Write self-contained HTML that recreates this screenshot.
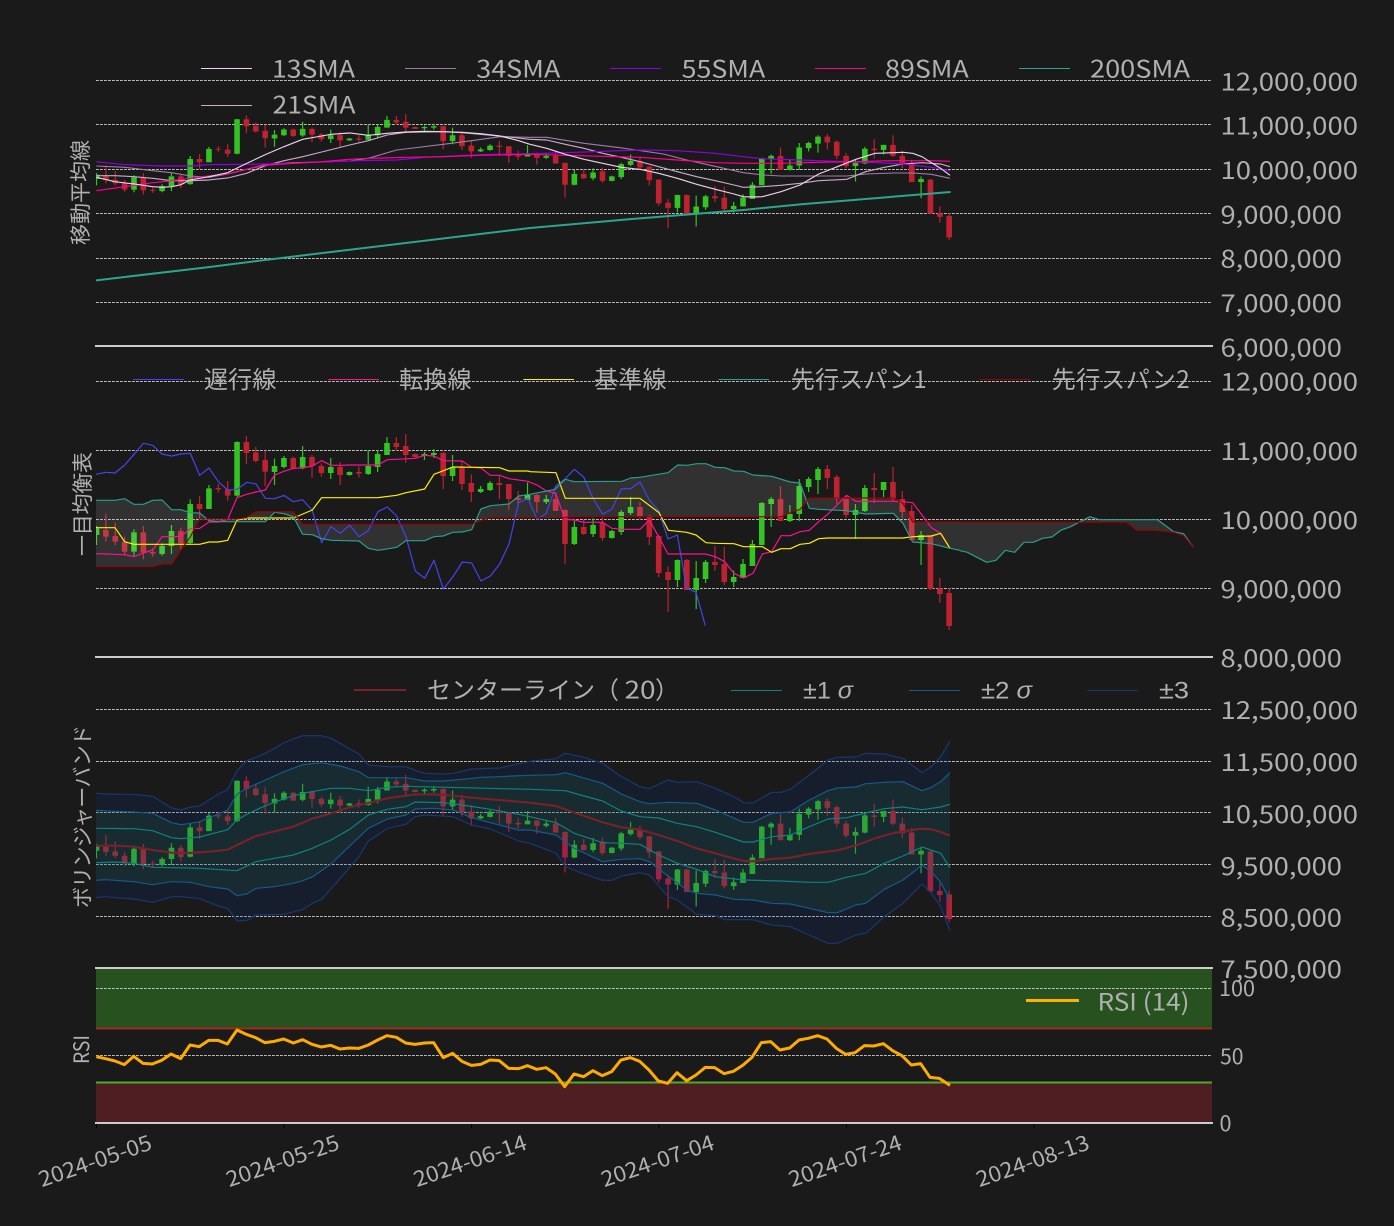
<!DOCTYPE html>
<html lang="ja"><head><meta charset="utf-8"><title>Chart</title>
<style>
html,body{margin:0;padding:0;background:#1a1a1a;width:1394px;height:1226px;overflow:hidden}
svg{display:block}
text{font-family:"Noto Sans CJK JP","Liberation Sans",sans-serif;fill:#b0b0b0}
text.l{font-family:"Liberation Sans","Noto Sans CJK JP",sans-serif}
.g{stroke:#bdbdbd;stroke-width:1;stroke-dasharray:2.8 1.2;fill:none}
.s{stroke:#cccccc;stroke-width:2;fill:none}
.c path{vector-effect:non-scaling-stroke;fill:none}
.w{stroke-width:1.2}.b{stroke-width:5.6}
.gn{stroke:#33c322}.rd{stroke:#bd2230}
polyline{fill:none;stroke-linejoin:round}
</style></head><body>
<svg width="1394" height="1226" viewBox="0 0 1394 1226" xmlns="http://www.w3.org/2000/svg">
<defs>
<clipPath id="pc"><rect x="96" y="0" width="1116" height="1226"/></clipPath>
<g id="cd" class="c">
<path class="gn w" d="M0 498V555M4 508V587M7 550V587M8 495V582M10 418V552M12 375V447M15 244V410M19 296V375M20 288V325M22 258V328M25 294V357M27 334V347M29 270V345M30 270V336M31 231V285M35 276V300M36 267V294M38 285V363M41 378V399M42 363V393M46 367V420M48 405V432M51 483V555M53 475V531M55 510V536M56 450V525M57 411V465M62 598V681M64 603V747M65 600V669M68 632V681M69 597V654M70 540V618M71 426V555M72 411V501M74 435V486M75 357V483M76 351V396M77 321V402M81 432V537M82 375V456M84 366V411M88 513V615"/>
<path class="gn b" d="M0 505V525M4 517V575M7 558V582M8 513V558M10 432V549M12 385V447M15 246V407M19 318V336M20 294V321M22 291V322M25 321V339M27 336V345M29 318V342M30 282V321M31 249V285M35 282V288M36 279V285M38 321V348M41 387V396M42 369V390M46 405V420M48 417V426M51 501V552M53 495V522M55 513V534M56 456V516M57 441V459M62 600V660M64 654V690M65 606V657M68 651V666M69 612V654M70 552V618M71 429V555M72 417V432M74 462V483M75 378V462M76 357V381M77 327V360M81 450V465M82 384V453M84 366V390M88 525V540"/>
<path class="rd w" d="M1 462V545M2 488V555M3 530V585M5 498V598M6 565V590M9 503V568M11 408V478M13 372V398M14 363V422M16 228V312M17 261V308M18 272V378M21 290V327M23 285V353M24 310V350M26 306V375M28 320V353M32 231V273M33 222V308M34 281V292M37 276V387M39 303V390M40 343V426M43 347V417M44 372V450M45 393V435M47 402V458M49 396V453M50 448V612M52 478V525M54 472V543M58 426V480M59 465V555M60 525V651M61 620V756M63 597V690M66 558V633M67 561V675M73 378V483M78 315V387M79 345V432M80 405V474M83 339V429M85 321V423M86 393V474M87 435V540M89 525V690M90 654V729M91 684V810"/>
<path class="rd b" d="M1 510V530M2 528V545M3 545V575M5 517V578M6 576V581M9 513V550M11 432V447M13 384V388M14 388V407M16 246V279M17 277V303M18 300V335M21 294V325M23 291V318M24 318V339M26 321V345M28 336V341M32 249V261M33 258V285M34 282V291M37 279V348M39 321V372M40 369V396M43 369V375M44 372V417M45 414V420M47 405V426M49 417V453M50 450V552M52 501V522M54 489V534M58 441V471M59 468V531M60 528V639M61 636V660M63 600V690M66 606V615M67 612V666M73 417V483M78 327V354M79 351V417M80 417V465M83 384V390M85 366V417M86 417V456M87 453V540M89 528V687M90 685V702M91 699V798"/>
</g>
</defs>

<rect width="1394" height="1226" fill="#1a1a1a"/>

<!-- RSI fills -->
<rect x="96" y="968" width="1116" height="60.5" fill="#275220"/>
<rect x="96" y="1082.5" width="1116" height="40.5" fill="#4e1e22"/>

<!-- grid -->
<path class="g" d="M96 80.5H1212M96 124.5H1212M96 169.5H1212M96 213.5H1212M96 258.5H1212M96 302.5H1212M96 381.5H1212M96 450.5H1212M96 519.5H1212M96 588.5H1212M96 709.5H1212M96 761.5H1212M96 812.5H1212M96 864.5H1212M96 916.5H1212M96 988.5H1212M96 1055.5H1212"/>

<g clip-path="url(#pc)">
<!-- Panel 1 candles -->
<use href="#cd" transform="matrix(9.37 0 0 .214 96.5 66.6)"/>
<!-- Panel 2 candles -->
<use href="#cd" transform="matrix(9.37 0 0 .33333 96.5 360)"/>
<!-- Panel 3 candles -->
<use href="#cd" transform="matrix(9.37 0 0 .2507 96.5 719.1)"/>

<!-- Panel 1 lines left -->
<g transform="translate(90,50) scale(.33333)">
<polyline stroke="#2da58e" stroke-width="6" points="18,691 350,652 590,622 1320,534"/>
<polyline stroke="#a07ca8" stroke-width="3.3" points="19,348 104,352 188,362 245,368 301,378 357,382 413,372 470,358 526,344 610,338 695,336 779,333 835,325 920,300 1060,283 1145,272 1230,260 1320,262"/>
<polyline stroke="#cba9cb" stroke-width="3.4" points="19,377 75,377 132,380 188,385 245,392 301,392 357,390 413,384 470,370 526,347 582,332 638,320 695,306 779,285 835,272 892,255 948,247 1060,245 1117,248 1229,258 1320,268"/>
<polyline stroke="#9000e0" stroke-width="3.6" points="19,335 104,344 216,348 301,348 357,344 470,343 610,340 723,335 807,332 920,330 1004,322 1089,318 1173,314 1320,311"/>
<polyline stroke="#ff0090" stroke-width="3.6" points="19,422 104,410 188,398 245,392 301,385 357,378 413,371 470,358 526,346 610,340 695,335 779,328 835,325 948,322 1060,320 1173,316 1320,313"/>
<polyline stroke="#efd0ec" stroke-width="3.4" points="19,382 75,395 132,402 188,410 216,412 245,410 273,404 301,390 357,380 413,368 470,340 526,314 582,290 638,268 695,258 723,253 779,249 835,256 892,250 948,246 1004,244 1060,245 1117,247 1173,251 1229,258 1286,272 1320,283"/>
</g>
<!-- Panel 1 lines right -->
<g transform="translate(530,50) scale(.33333)">
<polyline stroke="#2da58e" stroke-width="6" points="0,534 330,505 640,480 810,463 1262,426"/>
<polyline stroke="#a07ca8" stroke-width="3.3" points="0,262 50,262 162,280 270,293 400,312 470,330 560,350 640,368 700,375 753,378 850,378 950,378 1007,372 1091,369 1148,369 1204,373 1260,385"/>
<polyline stroke="#cba9cb" stroke-width="3.4" points="0,268 50,270 106,283 162,295 218,310 274,322 330,335 386,350 442,365 500,380 556,392 612,405 640,412 697,410 753,406 810,400 866,392 950,388 1007,365 1063,352 1119,342 1176,338 1232,342 1260,350"/>
<polyline stroke="#9000e0" stroke-width="3.6" points="0,311 106,308 218,304 330,300 442,302 556,310 640,320 697,326 810,330 922,334 1035,338 1119,342 1204,352 1260,362"/>
<polyline stroke="#ff0090" stroke-width="3.6" points="0,313 106,316 218,319 330,322 442,330 556,338 640,340 753,340 866,337 978,335 1091,332 1204,332 1260,334"/>
<polyline stroke="#efd0ec" stroke-width="3.4" points="0,283 50,295 106,313 162,328 218,340 274,352 330,358 386,370 442,385 500,403 556,418 612,432 640,440 669,441 697,440 753,425 810,405 866,372 922,350 978,328 1035,310 1091,308 1119,307 1148,310 1176,320 1204,338 1232,355 1260,376"/>
</g>

<!-- Panel 2 left -->
<g transform="translate(90,360) scale(.33333)">
<path fill="#fff" fill-opacity=".1" fill-rule="evenodd" d="M18 421L75 421 104 416 132 433 160 433 188 421 216 420 245 449 273 449 301 458 329 459 357 482 385 485 526 485 554 457 582 461 610 470 638 523 667 524 695 536 723 541 807 543 835 565 864 571 920 562 948 542 1004 542 1032 530 1060 528 1089 517 1117 516 1145 509 1173 447 1201 437 1257 432 1286 408 1320 403V900H18ZM18 620L188 620 216 612 245 612 273 570 301 530 329 477 441 477 470 473 498 455 610 455 638 493 1145 493 1173 481 1201 473 1320 473V900H18Z"/>
<polyline stroke="#4444ee" stroke-width="3.6" points="18,343 47,337 75,339 104,315 132,283 160,250 188,256 216,282 245,288 273,282 301,280 329,346 357,324 385,365 413,390 441,388 470,367 498,372 526,415 554,416 582,406 610,425 638,419 667,452 695,548 723,500 751,520 779,495 807,530 835,512 864,455 892,441 920,468 948,530 976,633 1004,655 1032,601 1060,687 1089,650 1117,606 1145,609 1173,663 1201,648 1229,612 1257,552 1286,428 1314,415"/>
<polyline stroke="#ff1090" stroke-width="3.6" points="18,581 47,582 75,583 104,584 132,590 160,579 188,570 216,530 245,530 273,529 301,506 329,505 357,486 385,486 413,478 441,413 470,403 498,396 526,390 554,345 582,334 610,325 638,324 667,318 695,302 723,316 751,316 779,315 835,315 864,315 892,299 920,298 976,295 1004,286 1032,288 1060,302 1117,303 1145,322 1173,324 1201,346 1229,346 1257,356 1314,364 1320,367"/>
<polyline stroke="#ffee00" stroke-width="3.6" points="18,503 75,503 104,545 132,553 329,553 357,546 385,546 413,541 441,480 470,474 610,474 667,450 695,413 864,413 920,406 948,398 1004,387 1032,343 1089,321 1229,323 1257,333 1314,333 1320,335"/>
<polyline stroke="#2a9d8f" stroke-width="3.6" points="18,421 75,421 104,416 132,433 160,433 188,421 216,420 245,449 273,449 301,458 329,459 357,482 385,485 526,485 554,457 582,461 610,470 638,523 667,524 695,536 723,541 807,543 835,565 864,571 920,562 948,542 1004,542 1032,530 1060,528 1089,517 1117,516 1145,509 1173,447 1201,437 1257,432 1286,408 1320,403"/>
<polyline stroke="#990000" stroke-width="3.6" points="18,620 188,620 216,612 245,612 273,570 301,530 329,477 441,477 470,473 498,455 610,455 638,493 1145,493 1173,481 1201,473 1320,473"/>
</g>
<!-- Panel 2 middle -->
<g transform="translate(530,360) scale(.33333)">
<path fill="#fff" fill-opacity=".1" fill-rule="evenodd" d="M0 403L75 388 106 358 133 365 276 364 302 354 330 352 414 338 443 315 472 316 500 311 528 311 556 322 584 323 612 333 641 334 669 345 725 349 781 366 810 369 838 445 866 448 950 452 1007 462 1090 460 1119 490 1148 546 1204 551 1260 565 1290 571V900H0ZM0 473L106 472 133 470 753 470 781 458 810 448 838 414 1090 414 1119 430 1148 486 1290 486V900H0Z"/>
<polyline stroke="#4444ee" stroke-width="3.6" points="-6,415 21,478 49,460 77,378 105,357 133,328 161,351 189,415 218,463 246,447 274,386 302,386 330,366 358,420 386,452 414,537 442,525 470,685 498,697 526,797"/>
<polyline stroke="#ff1090" stroke-width="3.6" points="0,367 21,375 49,393 77,400 105,478 133,480 161,487 218,487 246,505 274,508 330,508 358,480 386,530 414,582 526,582 556,590 584,605 612,640 641,654 669,640 697,582 725,575 753,527 781,527 810,515 838,511 866,485 894,462 950,406 978,424 1090,424 1119,425 1148,428 1176,465 1204,503 1232,520 1260,565"/>
<polyline stroke="#ffee00" stroke-width="3.6" points="0,335 78,338 106,415 330,415 387,458 415,511 470,517 498,525 528,548 556,550 612,551 641,560 697,560 725,577 753,566 781,566 810,553 838,550 866,536 894,534 1119,534 1148,530 1204,528 1232,520 1260,565"/>
<polyline stroke="#2a9d8f" stroke-width="3.6" points="0,403 75,388 106,358 133,365 276,364 302,354 330,352 414,338 443,315 472,316 500,311 528,311 556,322 584,323 612,333 641,334 669,345 725,349 781,366 810,369 838,445 866,448 950,452 1007,462 1090,460 1119,490 1148,546 1204,551 1260,565 1290,571"/>
<polyline stroke="#990000" stroke-width="3.6" points="0,473 106,472 133,470 753,470 781,458 810,448 838,414 1090,414 1119,430 1148,486 1290,486"/>
</g>
<!-- Panel 2 right -->
<g transform="translate(960,340) scale(.33333)">
<path fill="#fff" fill-opacity=".1" fill-rule="evenodd" d="M0 632L22 637 80 667 108 661 136 631 164 637 192 607 220 607 248 595 276 591 304 570 332 560 360 545 390 530 418 539 592 539 641 575 671 581 700 622V900H0ZM0 547L500 547 530 571 592 571 641 577 671 587 700 622V900H0Z"/>
<polyline stroke="#2a9d8f" stroke-width="3.6" points="0,632 22,637 80,667 108,661 136,631 164,637 192,607 220,607 248,595 276,591 304,570 332,560 360,545 390,530 418,539 592,539 641,575 671,581 700,622"/>
<polyline stroke="#990000" stroke-width="3.6" points="0,547 500,547 530,571 592,571 641,577 671,587 700,622"/>
</g>

<!-- Panel 3 left -->
<g transform="translate(90,670) scale(.33333)">
<path fill="rgb(0,47,153)" fill-opacity=".15" fill-rule="evenodd" d="M18 370L47 372 104 373 132 373 188 379 216 396 245 414 273 420 301 411 329 408 357 390 385 372 413 359 441 302 470 272 498 262 526 250 554 235 582 218 610 207 638 197 695 197 723 205 751 220 779 237 807 252 835 285 892 290 948 290 976 301 1004 310 1060 312 1089 310 1145 297 1229 294 1286 281 1320 274V1000H18ZM18 683L47 680 75 683 132 687 188 697 245 680 273 680 329 686 385 708 413 716 441 752 470 752 498 735 582 733 638 719 667 700 695 688 751 625 807 560 835 513 892 475 948 463 976 440 1004 435 1089 440 1145 465 1201 477 1286 513 1320 520V1000H18Z"/>
<path fill="rgb(35,129,66)" fill-opacity=".15" fill-rule="evenodd" d="M18 421L75 424 132 426 188 430 245 458 273 464 301 460 329 455 413 420 441 372 470 355 526 330 582 305 638 284 695 278 751 288 807 305 835 323 892 323 948 323 1004 333 1060 333 1117 328 1173 322 1229 320 1286 317 1320 316V1000H18ZM18 631L47 629 75 631 132 635 188 644 245 635 301 637 357 650 413 657 441 677 470 672 498 655 554 650 610 640 638 632 667 621 723 582 779 528 835 475 892 447 948 435 976 417 1032 415 1089 420 1145 443 1201 458 1286 480 1320 480V1000H18Z"/>
<polyline stroke="#17396e" stroke-width="3.6" points="18,370 47,372 104,373 132,373 188,379 216,396 245,414 273,420 301,411 329,408 357,390 385,372 413,359 441,302 470,272 498,262 526,250 554,235 582,218 610,207 638,197 695,197 723,205 751,220 779,237 807,252 835,285 892,290 948,290 976,301 1004,310 1060,312 1089,310 1145,297 1229,294 1286,281 1320,274"/>
<polyline stroke="#17396e" stroke-width="3.6" points="18,683 47,680 75,683 132,687 188,697 245,680 273,680 329,686 385,708 413,716 441,752 470,752 498,735 582,733 638,719 667,700 695,688 751,625 807,560 835,513 892,475 948,463 976,440 1004,435 1089,440 1145,465 1201,477 1286,513 1320,520"/>
<polyline stroke="#175a88" stroke-width="3.6" points="18,421 75,424 132,426 188,430 245,458 273,464 301,460 329,455 413,420 441,372 470,355 526,330 582,305 638,284 695,278 751,288 807,305 835,323 892,323 948,323 1004,333 1060,333 1117,328 1173,322 1229,320 1286,317 1320,316"/>
<polyline stroke="#175a88" stroke-width="3.6" points="18,631 47,629 75,631 132,635 188,644 245,635 301,637 357,650 413,657 441,677 470,672 498,655 554,650 610,640 638,632 667,621 723,582 779,528 835,475 892,447 948,435 976,417 1032,415 1089,420 1145,443 1201,458 1286,480 1320,480"/>
<polyline stroke="#118080" stroke-width="3.6" points="18,475 132,476 188,482 245,503 273,506 329,501 413,479 441,450 470,433 526,407 582,386 638,370 723,355 779,355 835,362 892,352 948,349 1320,358"/>
<polyline stroke="#118080" stroke-width="3.6" points="18,578 75,576 132,580 188,592 245,593 329,595 441,602 498,575 554,565 610,555 667,535 723,510 779,478 835,435 892,418 948,410 976,396 1060,398 1117,405 1201,418 1286,433 1320,440"/>
<polyline stroke="#7a2028" stroke-width="6.5" points="18,527 75,527 132,530 188,540 245,548 301,549 357,545 413,539 441,525 498,498 554,484 610,470 667,446 723,430 779,412 835,399 892,385 976,373 1060,374 1145,383 1286,395 1320,398"/>
</g>
<!-- Panel 3 right -->
<g transform="translate(530,670) scale(.33333)">
<path fill="rgb(0,47,153)" fill-opacity=".15" fill-rule="evenodd" d="M0 274L78 266 106 250 162 262 218 280 274 320 330 350 358 356 414 330 442 337 500 335 556 355 612 380 641 398 669 399 725 367 753 367 781 358 838 315 894 270 922 262 978 261 1007 250 1063 252 1119 265 1176 308 1204 290 1232 260 1260 213V1000H0ZM0 520L78 550 106 590 162 612 218 631 246 631 274 618 330 608 358 615 414 680 442 690 500 733 556 737 584 749 669 749 725 765 781 770 838 795 894 820 922 820 978 795 1007 790 1063 740 1119 700 1176 642 1204 670 1232 710 1260 782V1000H0Z"/>
<path fill="rgb(35,129,66)" fill-opacity=".15" fill-rule="evenodd" d="M0 316L78 314 106 308 218 340 274 372 330 395 358 401 414 397 500 400 556 420 641 457 669 457 725 430 781 426 838 390 894 362 922 354 978 351 1007 341 1063 337 1119 335 1176 362 1204 352 1232 335 1260 308V1000H0ZM0 480L78 495 133 535 218 575 274 568 330 566 358 575 414 618 470 660 500 670 556 675 612 688 669 690 725 700 781 702 838 715 894 728 922 728 978 705 1007 700 1063 658 1119 630 1176 586 1204 605 1232 637 1260 690V1000H0Z"/>
<polyline stroke="#17396e" stroke-width="3.6" points="0,274 78,266 106,250 162,262 218,280 274,320 330,350 358,356 414,330 442,337 500,335 556,355 612,380 641,398 669,399 725,367 753,367 781,358 838,315 894,270 922,262 978,261 1007,250 1063,252 1119,265 1176,308 1204,290 1232,260 1260,213"/>
<polyline stroke="#17396e" stroke-width="3.6" points="0,520 78,550 106,590 162,612 218,631 246,631 274,618 330,608 358,615 414,680 442,690 500,733 556,737 584,749 669,749 725,765 781,770 838,795 894,820 922,820 978,795 1007,790 1063,740 1119,700 1176,642 1204,670 1232,710 1260,782"/>
<polyline stroke="#175a88" stroke-width="3.6" points="0,316 78,314 106,308 218,340 274,372 330,395 358,401 414,397 500,400 556,420 641,457 669,457 725,430 781,426 838,390 894,362 922,354 978,351 1007,341 1063,337 1119,335 1176,362 1204,352 1232,335 1260,308"/>
<polyline stroke="#175a88" stroke-width="3.6" points="0,480 78,495 133,535 218,575 274,568 330,566 358,575 414,618 470,660 500,670 556,675 612,688 669,690 725,700 781,702 838,715 894,728 922,728 978,705 1007,700 1063,658 1119,630 1176,586 1204,605 1232,637 1260,690"/>
<polyline stroke="#118080" stroke-width="3.6" points="0,358 106,362 162,378 218,393 274,423 330,440 386,444 442,460 500,470 556,487 640,516 669,516 725,500 753,498 781,495 838,470 894,447 950,443 1007,429 1063,416 1119,411 1176,419 1232,411 1260,403"/>
<polyline stroke="#118080" stroke-width="3.6" points="0,440 78,458 133,490 218,518 274,520 330,523 386,555 442,580 500,598 556,620 640,630 753,633 838,637 894,637 950,622 1007,610 1063,580 1119,558 1176,531 1232,550 1260,593"/>
<polyline stroke="#7a2028" stroke-width="6.5" points="0,398 78,408 133,428 218,457 274,472 330,479 386,495 442,513 500,535 556,550 640,573 669,574 725,567 781,563 838,552 922,541 978,526 1035,505 1091,489 1148,480 1176,476 1204,478 1232,486 1260,497"/>
</g>
</g>

<!-- RSI lines -->
<rect x="96" y="1027.5" width="1116" height="2" fill="#a32a20"/>
<rect x="96" y="1081.5" width="1116" height="2" fill="#4aad2a"/>
<g clip-path="url(#pc)">
<g transform="translate(30,960) scale(.33333)">
<polyline stroke="#ffaa00" stroke-width="9" points="199,290 227,296 255,303 283,314 311,289 339,310 367,312 395,301 423,282 452,296 480,255 508,260 536,241 564,241 592,252 621,210 649,223 677,233 705,248 733,244 761,237 790,249 818,239 846,253 874,261 902,256 930,267 958,264 987,265 1015,255 1043,240 1071,227 1099,232 1127,249 1155,253 1183,249 1211,248 1240,293 1268,280 1296,304 1324,316 1352,313 1380,300 1408,302 1436,325 1464,326 1470,325"/>
</g>
<g transform="translate(520,960) scale(.33333)">
<polyline stroke="#ffaa00" stroke-width="9" points="0,325 22,317 50,328 78,323 106,342 134,380 162,342 191,350 219,332 247,347 275,335 303,300 331,293 359,304 387,330 415,363 443,370 471,338 500,362 528,345 556,322 584,323 612,341 640,334 668,316 696,292 724,248 752,245 780,270 809,264 837,240 865,235 893,227 921,237 949,265 977,283 1005,278 1033,257 1061,258 1090,251 1118,272 1146,287 1174,315 1202,311 1230,352 1258,355 1290,376"/>
</g>
</g>

<!-- spines -->
<path class="s" d="M95 346H1213M95 657H1213M95 968H1213M95 1123H1213"/>
<!-- ticks -->
<path stroke="#000" stroke-width="1" fill="none" d="M96.5 1124V1128M284 1124V1128M471.5 1124V1128M659 1124V1128M846.5 1124V1128M1034 1124V1128"/>

<!-- Y tick labels -->
<g font-size="24">
<text x="1220.5" y="90.5" textLength="137.5" lengthAdjust="spacingAndGlyphs">12,000,000</text>
<text x="1220.5" y="134.5" textLength="137.5" lengthAdjust="spacingAndGlyphs">11,000,000</text>
<text x="1220.5" y="179" textLength="137.5" lengthAdjust="spacingAndGlyphs">10,000,000</text>
<text x="1220.5" y="223.5" textLength="121.5" lengthAdjust="spacingAndGlyphs">9,000,000</text>
<text x="1220.5" y="267.5" textLength="121.5" lengthAdjust="spacingAndGlyphs">8,000,000</text>
<text x="1220.5" y="312" textLength="121.5" lengthAdjust="spacingAndGlyphs">7,000,000</text>
<text x="1220.5" y="356.5" textLength="121.5" lengthAdjust="spacingAndGlyphs">6,000,000</text>
<text x="1220.5" y="390.7" textLength="137.5" lengthAdjust="spacingAndGlyphs">12,000,000</text>
<text x="1220.5" y="460" textLength="137.5" lengthAdjust="spacingAndGlyphs">11,000,000</text>
<text x="1220.5" y="529" textLength="137.5" lengthAdjust="spacingAndGlyphs">10,000,000</text>
<text x="1220.5" y="598" textLength="121.5" lengthAdjust="spacingAndGlyphs">9,000,000</text>
<text x="1220.5" y="667" textLength="121.5" lengthAdjust="spacingAndGlyphs">8,000,000</text>
<text x="1220.5" y="719" textLength="137.5" lengthAdjust="spacingAndGlyphs">12,500,000</text>
<text x="1220.5" y="771" textLength="137.5" lengthAdjust="spacingAndGlyphs">11,500,000</text>
<text x="1220.5" y="823" textLength="137.5" lengthAdjust="spacingAndGlyphs">10,500,000</text>
<text x="1220.5" y="875" textLength="121.5" lengthAdjust="spacingAndGlyphs">9,500,000</text>
<text x="1220.5" y="926.5" textLength="121.5" lengthAdjust="spacingAndGlyphs">8,500,000</text>
<text x="1220.5" y="978" textLength="121.5" lengthAdjust="spacingAndGlyphs">7,500,000</text>
</g>
<g font-size="21">
<text x="1219" y="996" textLength="36" lengthAdjust="spacingAndGlyphs">100</text>
<text x="1220" y="1064" textLength="23.5" lengthAdjust="spacingAndGlyphs">50</text>
<text x="1219.5" y="1131" textLength="12" lengthAdjust="spacingAndGlyphs">0</text>
</g>

<!-- Legend panel 1 -->
<g stroke-width="1">
<path stroke="#f4d0f0" d="M201 68.5H252"/><path stroke="#a07ca8" d="M405 68.5H456"/><path stroke="#9000e0" d="M610 68.5H661"/><path stroke="#ff0090" d="M815 68.5H866"/><path stroke="#2da58e" d="M1019 68.5H1070"/><path stroke="#cba9cb" d="M201 105.5H252"/>
</g>
<g font-size="24">
<text x="272" y="77.5" textLength="83" lengthAdjust="spacingAndGlyphs">13SMA</text>
<text x="476.3" y="77.5" textLength="84" lengthAdjust="spacingAndGlyphs">34SMA</text>
<text x="681.7" y="77.5" textLength="83.5" lengthAdjust="spacingAndGlyphs">55SMA</text>
<text x="885.2" y="77.5" textLength="83.5" lengthAdjust="spacingAndGlyphs">89SMA</text>
<text x="1090" y="77.5" textLength="100" lengthAdjust="spacingAndGlyphs">200SMA</text>
<text x="272.5" y="113.5" textLength="83" lengthAdjust="spacingAndGlyphs">21SMA</text>
</g>

<!-- Legend panel 2 -->
<g stroke-width="1">
<path stroke="#4444ee" d="M133.3 379.5H184"/><path stroke="#ff1090" d="M328.3 379.5H379"/><path stroke="#ffee00" d="M523.3 379.5H574"/><path stroke="#2a9d8f" d="M718.3 379.5H769"/><path stroke="#990000" d="M979.3 379.5H1030"/>
</g>
<g font-size="24">
<text x="204" y="388" textLength="72.5">遅行線</text>
<text x="399" y="388" textLength="72.5">転換線</text>
<text x="594" y="388" textLength="72.5">基準線</text>
<text x="790.7" y="388" textLength="136">先行スパン1</text>
<text x="1051.7" y="388" textLength="138">先行スパン2</text>
</g>

<!-- Legend panel 3 -->
<path stroke="#7a2028" stroke-width="2" d="M354 690H406"/>
<path stroke="#118080" stroke-width="1" d="M731 690.5H782"/>
<path stroke="#175a88" stroke-width="1" d="M909 690.5H960"/>
<path stroke="#17396e" stroke-width="1" d="M1087 690.5H1138"/>
<g font-size="24">
<text x="427" y="698.5">センターライン（</text>
<text x="624.5" y="698.5" textLength="31" lengthAdjust="spacingAndGlyphs">20</text>
<text x="655" y="698.5">）</text>
<text class="l" x="803" y="698.5" textLength="50" lengthAdjust="spacingAndGlyphs">±1 <tspan font-style="italic">σ</tspan></text>
<text class="l" x="981" y="698.5" textLength="51" lengthAdjust="spacingAndGlyphs">±2 <tspan font-style="italic">σ</tspan></text>
<text class="l" x="1159" y="698.5" textLength="30" lengthAdjust="spacingAndGlyphs">±3</text>
</g>

<!-- Legend RSI -->
<path stroke="#ffb000" stroke-width="3" d="M1026 1000.5H1079"/>
<text x="1097.5" y="1010.7" font-size="24" textLength="92" lengthAdjust="spacingAndGlyphs">RSI (14)</text>

<!-- Y axis titles -->
<g font-size="21" fill="#bbb">
<text transform="translate(88,245) rotate(-90)" textLength="105">移動平均線</text>
<text transform="translate(90,556) rotate(-90)" textLength="104">一目均衡表</text>
<text transform="translate(90,908) rotate(-90)" textLength="183">ボリンジャーバンド</text>
<text transform="translate(89,1064) rotate(-90)" textLength="29" lengthAdjust="spacingAndGlyphs">RSI</text>
</g>

<!-- X labels -->
<g font-size="21">
<text transform="translate(41.7,1187.3) rotate(-19)" textLength="118" lengthAdjust="spacingAndGlyphs">2024-05-05</text>
<text transform="translate(229.2,1187.3) rotate(-19)" textLength="118" lengthAdjust="spacingAndGlyphs">2024-05-25</text>
<text transform="translate(416.7,1187.3) rotate(-19)" textLength="118" lengthAdjust="spacingAndGlyphs">2024-06-14</text>
<text transform="translate(604.2,1187.3) rotate(-19)" textLength="118" lengthAdjust="spacingAndGlyphs">2024-07-04</text>
<text transform="translate(791.7,1187.3) rotate(-19)" textLength="118" lengthAdjust="spacingAndGlyphs">2024-07-24</text>
<text transform="translate(979.2,1187.3) rotate(-19)" textLength="118" lengthAdjust="spacingAndGlyphs">2024-08-13</text>
</g>
</svg>
</body></html>
